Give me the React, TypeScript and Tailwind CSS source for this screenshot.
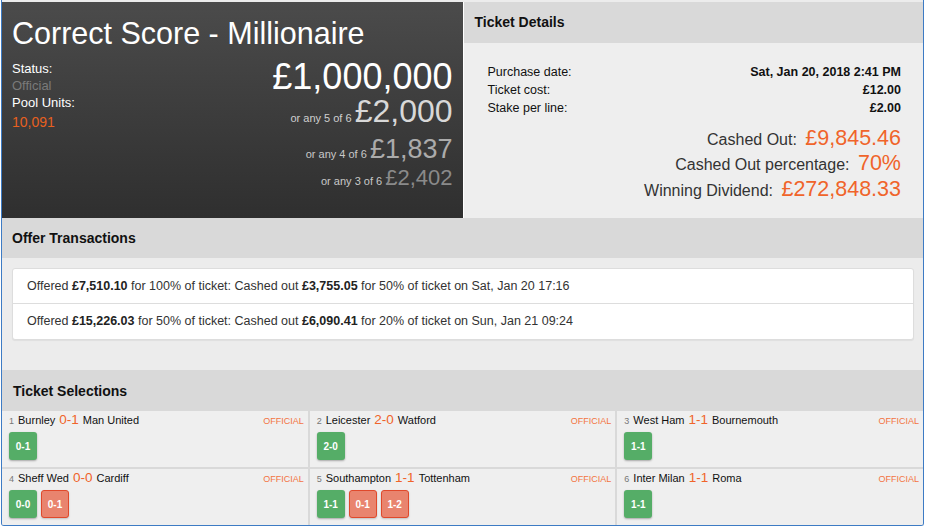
import React from "react";

const ORANGE = "text-[#f0642a]";

type Sel = { n: number; home: string; score: string; away: string; picks: { s: string; win: boolean }[] };

const sels: Sel[] = [
  { n: 1, home: "Burnley", score: "0-1", away: "Man United", picks: [{ s: "0-1", win: true }] },
  { n: 2, home: "Leicester", score: "2-0", away: "Watford", picks: [{ s: "2-0", win: true }] },
  { n: 3, home: "West Ham", score: "1-1", away: "Bournemouth", picks: [{ s: "1-1", win: true }] },
  { n: 4, home: "Sheff Wed", score: "0-0", away: "Cardiff", picks: [{ s: "0-0", win: true }, { s: "0-1", win: false }] },
  { n: 5, home: "Southampton", score: "1-1", away: "Tottenham", picks: [{ s: "1-1", win: true }, { s: "0-1", win: false }, { s: "1-2", win: false }] },
  { n: 6, home: "Inter Milan", score: "1-1", away: "Roma", picks: [{ s: "1-1", win: true }] },
];

function Pill({ s, win }: { s: string; win: boolean }) {
  return (
    <div
      className={
        win
          ? "w-[28px] h-[28px] rounded-[3px] bg-[#55ad67] text-white text-[10px] font-bold flex items-center justify-center shadow-[0_1px_2px_rgba(0,0,0,0.3)]"
          : "w-[28px] h-[28px] rounded-[3px] bg-[#e9846e] border border-[#e0492b] text-white text-[10px] font-bold flex items-center justify-center shadow-[0_1px_2px_rgba(0,0,0,0.2)]"
      }
    >
      {s}
    </div>
  );
}

export default function App() {
  return (
    <div className="w-[926px] h-[527px] bg-white font-['Liberation_Sans',Arial,sans-serif]">
      <div className="ml-[1px] w-[923px] border-x border-b border-[#3d7bc4] rounded-b-[3px] overflow-hidden">
        <div className="h-[2px] bg-[#ececec]" />
        {/* Top section */}
        <div className="flex h-[216px]">
          <div className="w-[461px] bg-gradient-to-b from-[#4b4b4b] to-[#2f2f2f] pl-[10px] pr-[10px] pt-[14px]">
            <div className="text-white text-[30.5px] leading-[34px]">Correct Score - Millionaire</div>
            <div className="flex justify-between">
              <div className="pt-[10px]">
                <div className="text-white text-[13px] leading-[17px]">Status:</div>
                <div className="text-[#7a7a7a] text-[13px] leading-[17px]">Official</div>
                <div className="text-white text-[13px] leading-[18px]">Pool Units:</div>
                <div className="text-[#e8601f] text-[14px] leading-[20px]">10,091</div>
              </div>
              <div className="text-right pt-[9px]">
                <div className="text-white text-[36px] leading-[36px]">£1,000,000</div>
                <div className="leading-[32px]">
                  <span className="text-[#cfcfcf] text-[11px]">or any 5 of 6 </span>
                  <span className="text-[#d8d8d8] text-[32px]">£2,000</span>
                </div>
                <div className="leading-[30px]">
                  <span className="text-[#c8c8c8] text-[11px]">or any 4 of 6 </span>
                  <span className="text-[#ababab] text-[27px]">£1,837</span>
                </div>
                <div className="leading-[18px]">
                  <span className="text-[#c8c8c8] text-[11px]">or any 3 of 6 </span>
                  <span className="text-[#8a8a8a] text-[22px]">£2,402</span>
                </div>
              </div>
            </div>
          </div>
          <div className="w-[460px] ml-[1px] bg-[#eeeeee] flex flex-col">
            <div className="h-[41px] bg-[#d9d9d9] flex items-center pl-[11px] text-[14px] font-bold text-[#111]">
              Ticket Details
            </div>
            <div className="pl-[24px] pr-[22px] pt-[20px] text-[12.5px] text-[#111]">
              <div className="flex justify-between leading-[18px]">
                <span>Purchase date:</span>
                <span className="font-bold">Sat, Jan 20, 2018 2:41 PM</span>
              </div>
              <div className="flex justify-between leading-[18px]">
                <span>Ticket cost:</span>
                <span className="font-bold">£12.00</span>
              </div>
              <div className="flex justify-between leading-[18px]">
                <span>Stake per line:</span>
                <span className="font-bold">£2.00</span>
              </div>
              <div className="mt-[11px] text-right">
                <div className="leading-[24px]">
                  <span className="text-[16px] leading-none text-[#333]">Cashed Out: </span>
                  <span className={`text-[21.5px] leading-none ${ORANGE} ml-[4px]`}>£9,845.46</span>
                </div>
                <div className="leading-[26px]">
                  <span className="text-[16px] leading-none text-[#333]">Cashed Out percentage: </span>
                  <span className={`text-[21.5px] leading-none ${ORANGE} ml-[4px]`}>70%</span>
                </div>
                <div className="leading-[25px]">
                  <span className="text-[16px] leading-none text-[#333]">Winning Dividend: </span>
                  <span className={`text-[21.5px] leading-none ${ORANGE} ml-[4px]`}>£272,848.33</span>
                </div>
              </div>
            </div>
          </div>
        </div>

        {/* Offer Transactions */}
        <div className="h-[40px] bg-[#d9d9d9] flex items-center pl-[10px] text-[14px] font-bold text-[#111]">
          Offer Transactions
        </div>
        <div className="bg-[#ececec] pt-[10px] pb-[30px] pl-[10px] pr-[9px]">
          <div className="bg-white border border-[#dddddd] rounded-[3px] shadow-[0_1px_1px_rgba(0,0,0,0.06)] text-[12.5px] text-[#333]">
            <div className="h-[35px] flex items-center pl-[14px] border-b border-[#dddddd]">
              <span>
                Offered <b className="text-[#222]">£7,510.10</b> for 100% of ticket: Cashed out{" "}
                <b className="text-[#222]">£3,755.05</b> for 50% of ticket on Sat, Jan 20 17:16
              </span>
            </div>
            <div className="h-[35px] flex items-center pl-[14px]">
              <span>
                Offered <b className="text-[#222]">£15,226.03</b> for 50% of ticket: Cashed out{" "}
                <b className="text-[#222]">£6,090.41</b> for 20% of ticket on Sun, Jan 21 09:24
              </span>
            </div>
          </div>
        </div>

        {/* Ticket Selections */}
        <div className="h-[41px] bg-[#d9d9d9] flex items-center pl-[11px] pt-[1px] text-[14px] font-bold text-[#111]">
          Ticket Selections
        </div>
        <div className="grid grid-cols-3 gap-[2px] bg-[#d9d9d9]">
          {sels.map((s) => (
            <div key={s.n} className="h-[56px] bg-[#efefef] pl-[7px] pr-[4px] pt-[1px]">
              <div className="flex items-baseline leading-[16px]">
                <span className="text-[9px] text-[#777] mr-[4px]">{s.n}</span>
                <span className="text-[11px] text-[#111]">{s.home}</span>
                <span className={`text-[13.5px] ${ORANGE} mx-[4px]`}>{s.score}</span>
                <span className="text-[11px] text-[#111]">{s.away}</span>
                <span className="ml-auto text-[9px] text-[#f37442]">OFFICIAL</span>
              </div>
              <div className="flex gap-[4px] mt-[3px]">
                {s.picks.map((p, i) => (
                  <Pill key={i} s={p.s} win={p.win} />
                ))}
              </div>
            </div>
          ))}
        </div>
      </div>
    </div>
  );
}
